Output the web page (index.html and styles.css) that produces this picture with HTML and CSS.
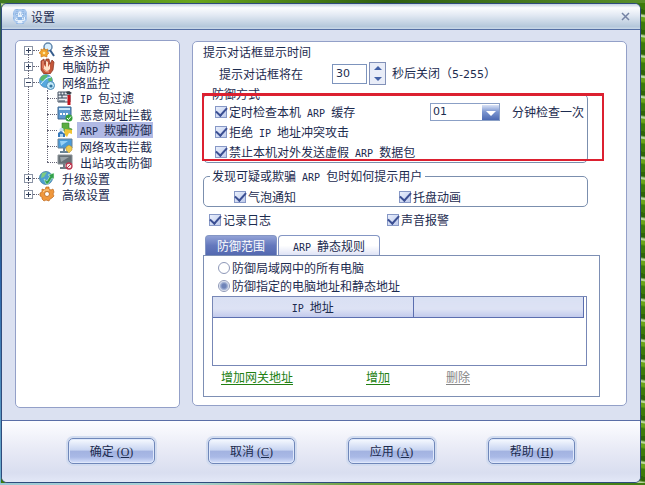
FILE: index.html
```
<!DOCTYPE html>
<html lang="zh-CN">
<head>
<meta charset="utf-8">
<title>设置</title>
<link rel="stylesheet" href="styles.css">
</head>
<body>
<main class="window">
  <header class="titlebar">
    <svg class="logo" width="16" height="18" viewBox="0 0 16 18"><path d="M3 1h10l2 3v8l-4 4H5l-4-4V4z" fill="#a9c8ee"/><path d="M8 3l4 4h-2v2h3v3l-3 3H6l-3-3V9h3V7H4z" fill="#e6f1fd"/><path d="M1 6h14M1 10h14M5 1v15M11 1v15" stroke="#7fa9dc" stroke-dasharray="1 1"/><path d="M6 9h4v3H6z" fill="#88b2e4"/></svg>
    <h1>设置</h1>
    <button class="close" aria-label="关闭"><svg width="9" height="9" viewBox="0 0 9 9"><path d="M1 1l7 7M8 1L1 8" stroke="#7482a4" stroke-width="1.5"/></svg></button>
  </header>

  <div class="content">
    <nav class="panel tree">
      <ul>
        <li class="root"><div class="row"><button class="toggle plus" aria-label="展开"></button><span class="stub"></span>
          <svg width="16" height="16" viewBox="0 0 16 16"><circle cx="9" cy="5" r="4" fill="#d8efff" stroke="#6388ad" stroke-width="1.5"/><path d="M11 8l4 6" stroke="#355c8c" stroke-width="2"/><path d="M5 6l1 2 3-1-1 3 2 1-2 2v2l-3-1-3 1v-3l-2-1 2-2V7l2 1z" fill="#f3a52d" stroke="#c87511" stroke-width=".6"/><circle cx="5" cy="11" r="1.3" fill="#ffe8a0"/></svg>
          <span class="name">查杀设置</span></div></li>
        <li class="root"><div class="row"><button class="toggle plus" aria-label="展开"></button><span class="stub"></span>
          <svg width="16" height="16" viewBox="0 0 16 16"><path d="M2 3l3-2 1 5 1-5h3l1 5 2-4 2 2-1 8-3 4H5l-3-4z" fill="#c4573a" stroke="#85301f" stroke-width=".7"/><path d="M5 7v4q3 4 6 0V6L9 9V4L7 3v6z" fill="#ffe3ca"/><path d="M4 3v7q2 5 6 4" fill="none" stroke="#f3a184"/></svg>
          <span class="name">电脑防护</span></div></li>
        <li class="root"><div class="row"><button class="toggle" aria-label="收起"></button><span class="stub"></span>
          <svg width="16" height="16" viewBox="0 0 16 16"><circle cx="7" cy="7" r="6.5" fill="#55a9df" stroke="#3577ab" stroke-width=".6"/><path d="M2 3q3-3 7-2L7 4 4 7 1 6zM9 5l4-2v4l-3 2z" fill="#5cb969"/><path d="M2 10q5-7 10-7" stroke="#e6f8ff" fill="none"/><circle cx="11.500" cy="11.500" r="4" fill="#c1e8f9" stroke="#4388b7"/><circle cx="12" cy="12" r="1.600" fill="#35759f"/></svg>
          <span class="name">网络监控</span></div>
          <ul class="children">
            <li class="row"><span class="stub"></span>
              <svg width="16" height="16" viewBox="0 0 16 16"><path d="M1 2h12v10H1z" fill="#e8edf2" stroke="#485565"/><path d="M1 5h12M1 8h9M4 2v3M7 2v3M5 5v3M2 11h6" stroke="#344354"/><path d="M9 2q3-2 6 1l-2 1h-3z" fill="#3b4148"/><path d="M10.500 5h3v10h-3z" fill="#c3141c"/></svg>
              <span class="name"><span class="latin">IP </span>包过滤</span></li>
            <li class="row"><span class="stub"></span>
              <svg width="16" height="16" viewBox="0 0 16 16"><path d="M1 1h13v12H1z" fill="#5c98cf" stroke="#3c6691"/><path d="M2 2h11v2H2z" fill="#c9e6fa"/><path d="M3 8h8" stroke="#fff" stroke-width="2" stroke-dasharray="2 1"/><circle cx="12" cy="12" r="3.500" fill="#35a03b"/><path d="M10 12l1.500 1.500L14 10.500" fill="none" stroke="#fff"/></svg>
              <span class="name">恶意网址拦截</span></li>
            <li class="row"><span class="stub"></span>
              <svg width="16" height="16" viewBox="0 0 16 16"><path d="M5 1h7v5l3 1-1 3-5 1-4-4z" fill="#5bad42" stroke="#358435" stroke-width=".6"/><path d="M8 7l7 1v4l-3-1-2 4-3-3z" fill="#f0c437"/><circle cx="4.500" cy="8" r="2.200" fill="#c9e1f2"/><path d="M1 15V11l3-2 4 3v3z" fill="#3679bb"/><path d="M3 12h3v3H3z" fill="#afd5ef"/></svg>
              <span class="name selected"><span class="latin">ARP </span>欺骗防御</span></li>
            <li class="row"><span class="stub"></span>
              <svg width="16" height="16" viewBox="0 0 16 16"><path d="M1 1h14v9H1z" fill="#4b9bd8" stroke="#6a8196"/><path d="M3 3h8L4 8z" fill="#97d1f6"/><path d="M7 10v3M3 14h8" stroke="#6b8496" stroke-width="2"/><path d="M9 9l3-2 3 2v3l-3 3-3-3z" fill="#efcb54" stroke="#a98624" stroke-width=".5"/></svg>
              <span class="name">网络攻击拦截</span></li>
            <li class="row"><span class="stub"></span>
              <svg width="16" height="16" viewBox="0 0 16 16"><path d="M1 1h14v9H1z" fill="#677076" stroke="#8a9196"/><path d="M3 3h9L4 8z" fill="#9aa3a7"/><path d="M7 10v3M3 14h7" stroke="#707a82" stroke-width="2"/><circle cx="12" cy="12" r="3" fill="#fbe9e9" stroke="#b93850" stroke-width="1.300"/><path d="M10 14l4-4" stroke="#b93850"/></svg>
              <span class="name">出站攻击防御</span></li>
          </ul></li>
        <li class="root"><div class="row"><button class="toggle plus" aria-label="展开"></button><span class="stub"></span>
          <svg width="16" height="16" viewBox="0 0 16 16"><circle cx="7" cy="8" r="6.500" fill="#4f9fd0" stroke="#2f7099" stroke-width=".7"/><path d="M3 3l5-1-3 5-3 1z" fill="#80cb82"/><path d="M5 9l3 2 3-5-2-1 6-2v6l-2-1-4 6H7z" fill="#32a04b" stroke="#e1ffe0" stroke-width=".5"/></svg>
          <span class="name">升级设置</span></div></li>
        <li class="root"><div class="row"><button class="toggle plus" aria-label="展开"></button><span class="stub"></span>
          <svg width="16" height="16" viewBox="0 0 16 16"><path d="M7 1h3v2l2 1 2-1 1 3-1 2 1 2-2 2-2 1-1 2-3-1-2 1-2-2V11L1 10V7l2-1V3l3 1z" fill="#f0983c" stroke="#bd691e" stroke-width=".7"/><circle cx="8" cy="8" r="2.500" fill="#fff" stroke="#c2762c"/><path d="M4 6q2-3 6-2" fill="none" stroke="#ffd896"/></svg>
          <span class="name">高级设置</span></div></li>
      </ul>
    </nav>

    <section class="panel settings">
      <h2>提示对话框显示时间</h2>
      <div class="timeout">
        <label for="sec">提示对话框将在</label>
        <input id="sec" class="seconds" type="text" value="30">
        <span class="spinner">
          <button aria-label="增加秒数"><svg width="8" height="4" viewBox="0 0 8 4"><path d="M4 0l4 4H0z" fill="#4361a6"/></svg></button>
          <button aria-label="减少秒数"><svg width="8" height="4" viewBox="0 0 8 4"><path d="M0 0h8L4 4z" fill="#4361a6"/></svg></button>
        </span>
        <span>秒后关闭（<span class="range">5-255</span>）</span>
      </div>

      <fieldset class="defence">
        <legend>防御方式</legend>
        <div class="option">
          <label class="check"><input type="checkbox" checked>定时检查本机<span class="latin"> ARP </span>缓存</label>
          <span class="interval">
            <span class="combo"><select id="every" aria-label="检查间隔"><option>01</option></select><svg width="17" height="15" viewBox="0 0 17 15"><defs><linearGradient id="drop" x2="0" y2="1"><stop offset="0" stop-color="#d9e2f6"/><stop offset=".45" stop-color="#7c96d0"/><stop offset="1" stop-color="#4c69b2"/></linearGradient></defs><path d="M0 0h17v15H0z" fill="url(#drop)"/><path d="M4 6h10l-5 5z" fill="#fff"/></svg></span>
            <label for="every">分钟检查一次</label>
          </span>
        </div>
        <div class="option"><label class="check"><input type="checkbox" checked>拒绝<span class="latin"> IP </span>地址冲突攻击</label></div>
        <div class="option"><label class="check"><input type="checkbox" checked>禁止本机对外发送虚假<span class="latin"> ARP </span>数据包</label></div>
        <div class="highlight"></div>
      </fieldset>

      <fieldset class="notify">
        <legend>发现可疑或欺骗<span class="latin"> ARP </span>包时如何提示用户</legend>
        <div class="pair near">
          <label class="check"><input type="checkbox" checked>气泡通知</label>
          <label class="check"><input type="checkbox" checked>托盘动画</label>
        </div>
      </fieldset>

      <div class="pair logs">
        <label class="check"><input type="checkbox" checked>记录日志</label>
        <label class="check"><input type="checkbox" checked>声音报警</label>
      </div>

      <div class="tabs" role="tablist">
        <button class="tab active" role="tab" aria-selected="true">防御范围</button>
        <button class="tab" role="tab" aria-selected="false"><span class="latin">ARP </span>静态规则</button>
      </div>
      <div class="scope" role="tabpanel">
        <label class="choice"><input type="radio" name="scope">防御局域网中的所有电脑</label>
        <label class="choice"><input type="radio" name="scope" checked>防御指定的电脑地址和静态地址</label>
        <div class="list">
          <table>
            <thead><tr><th class="address"><span class="latin">IP </span>地址</th><th></th></tr></thead>
          </table>
        </div>
        <div class="links">
          <a href="#">增加网关地址</a>
          <a href="#">增加</a>
          <a href="#" class="off">删除</a>
        </div>
      </div>
    </section>
  </div>

  <footer class="actions">
    <button>确定<span class="key">(<u>O</u>)</span></button>
    <button>取消<span class="key">(<u>C</u>)</span></button>
    <button>应用<span class="key">(<u>A</u>)</span></button>
    <button>帮助<span class="key">(<u>H</u>)</span></button>
  </footer>
</main>
</body>
</html>
```
FILE: styles.css
```
* { box-sizing: border-box; }

body {
  margin: 0;
  min-height: 100vh;
  display: flex;
  padding: 3px 4px 2px 1px;
  color: #1c2b4f;
  font: 12px/16px "Noto Sans CJK SC", sans-serif;
  background:
    linear-gradient(90deg, #3f7a22, #6aa61c 30%, #2f5f10 60%, #5a8f2a) top / 100% 3px no-repeat,
    linear-gradient(90deg, #9cc9d4, #a9d3d6 30%, #6f9f3c 55%, #3f7d12) bottom / 100% 2px no-repeat,
    linear-gradient(#31604f 45%, #2a62a8 55%, #6db0cf) left / 1px 100% no-repeat,
    repeating-linear-gradient(10deg, #3c7a0a 0 7px, #69a31a 9px 12px, #b9d69a 13px 14px, #2e6408 16px 20px);
}

h1, h2, ul { margin: 0; padding: 0; font-size: 12px; font-weight: 400; }
ul { list-style: none; }
button, input, select { font: inherit; color: inherit; margin: 0; padding: 0; border-radius: 0; }
svg { display: block; flex: none; }

.latin { font: 10px/12px "DejaVu Sans Mono", monospace; white-space: pre; }

.window {
  flex: 1;
  display: flex;
  flex-direction: column;
  border: 1px solid #2f4b7c;
  border-radius: 6px;
  overflow: hidden;
  background: #dbe1f1;
}

.titlebar {
  display: flex;
  align-items: center;
  height: 26px;
  padding: 0 10px;
  border-bottom: 1px solid #5570a5;
  background: linear-gradient(#c3d0e0, #fbfcfe 15%, #e2e9f3 45%, #b5c8db 90%, #c9d8e8);
}
.titlebar h1 { margin-left: 3px; flex: 1; }
.close { border: 0; background: none; }

.content {
  flex: 1;
  display: flex;
  align-items: flex-start;
  gap: 12px;
  padding: 10px 13px 12px;
}
.panel { background: #fff; border: 1px solid #93a0c8; border-radius: 5px; }

.tree { width: 165px; align-self: stretch; padding: 1px 8px; }
.row { display: flex; align-items: center; height: 16px; }
.root { position: relative; }
.root:not(:last-child)::before {
  content: "";
  position: absolute;
  left: 4px;
  top: 12px;
  bottom: -4px;
  border-left: 1px dotted #667;
}
.toggle {
  width: 9px;
  height: 9px;
  border: 1px solid #8b94a5;
  background: linear-gradient(#33405c, #33405c) center / 5px 1px no-repeat, #fff;
}
.toggle.plus {
  background: linear-gradient(#33405c, #33405c) center / 5px 1px no-repeat,
    linear-gradient(#33405c, #33405c) center / 1px 5px no-repeat, #fff;
}
.stub { width: 6px; border-top: 1px dotted #667; }
.name { margin-left: 4px; padding: 0 1px 0 3px; line-height: 15px; white-space: nowrap; }
.selected { background: #b0b9e4; }
.children { position: relative; padding-left: 23px; }
.children::before {
  content: "";
  position: absolute;
  left: 23px;
  top: 0;
  bottom: 8px;
  border-left: 1px dotted #667;
}
.children .stub { width: 10px; }

.settings { flex: 1; padding: 2px 26px 8px 10px; margin-top: 1px; }

.timeout { display: flex; align-items: center; height: 23px; margin: 2px 0; padding-left: 16px; }
.seconds { width: 35px; height: 20px; margin-left: 29px; padding-left: 3px; border: 1px solid #7d94bd; background: #fff; }
.seconds, .range, .combo select { font-family: "DejaVu Sans", sans-serif; font-size: 11px; }
.spinner { display: flex; flex-direction: column; width: 17px; height: 23px; margin: 0 6px 0 2px; border: 1px solid #8291b8; }
.spinner button { flex: 1; display: grid; place-items: center; border: 0; background: #e9edf8; }

fieldset { position: relative; min-width: 0; margin: 0 12px 0 0; border: 1px solid #7b8fae; border-radius: 5px; }
legend { height: 14px; line-height: 14px; margin-left: 6px; padding: 0 3px 0 2px; }

.defence { padding: 1px 0; }
.option { display: flex; align-items: center; height: 20px; padding-left: 11px; }
.option:nth-of-type(3) { height: 19px; }
.check { white-space: pre; }
.check input {
  appearance: none;
  width: 12px;
  height: 12px;
  margin: 2px 2px 0 0;
  border: 1px solid #8798c6;
  background: linear-gradient(135deg, #e9effc, #bfcbec);
  display: inline-grid;
  vertical-align: top;
  place-items: center;
}
.check input:checked::after {
  content: "";
  width: 9px;
  height: 5px;
  margin-bottom: 3px;
  border: solid #3b4f93;
  border-width: 0 0 2px 2px;
  transform: rotate(-48deg);
}

.interval { display: flex; align-items: center; margin: 0 3px 0 auto; }
.combo { display: flex; align-items: center; width: 70px; height: 18px; margin-right: 12px; border: 1px solid #8ba0c6; background: #fff; }
.combo select { appearance: none; flex: 1; min-width: 0; height: 16px; padding-left: 2px; border: 0; background: none; }

.highlight { position: absolute; inset: -8px -17px 1px -2px; border: 2px solid #dc2030; border-top-width: 3px; pointer-events: none; }

.notify { margin-top: 6px; padding: 6px 0 1px; }
.pair { display: grid; grid-template-columns: 178px 1fr; height: 16px; padding-left: 6px; }
.pair.near { grid-template-columns: 165px 1fr; padding-left: 30px; }
.logs { margin: 5px 0 7px; }

.tabs { display: flex; gap: 1px; height: 20px; padding-left: 2px; }
.tab {
  height: 20px;
  padding: 0 14px;
  border: 1px solid #8496c4;
  border-bottom: 0;
  border-radius: 4px 4px 0 0;
  background: linear-gradient(#fff 50%, #dfe3f5);
}
.tab.active { padding: 0 11px; color: #fff; background: linear-gradient(#92a2d6, #6478bd 50%, #5469b0); }

.scope { padding: 3px 12px 11px 8px; border: 1px solid #7d8fb4; }
.choice { display: flex; align-items: center; height: 18px; padding-left: 6px; }
.choice input { appearance: none; width: 12px; height: 12px; margin-right: 2px; border: 1px solid #8e98b8; border-radius: 50%; background: #fff; }
.choice input:checked { background: radial-gradient(circle, #6f84b8 0 2px, #b3c0dd 4px, #fff 5px); }

.list { height: 70px; margin: 1px 0 3px; padding-right: 2px; border: 1px solid #7787b6; }
.list table { width: 100%; border-collapse: collapse; table-layout: fixed; }
.list th {
  height: 20px;
  padding: 0;
  font-weight: 400;
  border-right: 1px solid #5b6eaf;
  border-bottom: 1px solid #5b6eaf;
  background: linear-gradient(#d9e0f3, #dde2f4 60%, #c2caec);
}
.address { width: 54%; }

.links { display: grid; grid-template-columns: 145px 80px 1fr; padding-left: 9px; }
.links a { justify-self: start; color: #228012; text-underline-offset: 2px; }
.links .off { color: #858585; }

.actions {
  display: flex;
  justify-content: center;
  gap: 53px;
  height: 62px;
  padding: 17px 0 0 1px;
  border-top: 1px solid #5a6ea6;
  background: linear-gradient(#fdfdff, #e9ebf6 45%, #d9def0 85%, #e3e8f7);
}
.actions button {
  width: 87px;
  height: 26px;
  border: 1px solid #6f87b9;
  border-radius: 5px;
  box-shadow: 0 0 0 2px #d2dcf0, inset 0 0 0 1px #dfe8fb;
  background: linear-gradient(#f7faff, #cad6f2 45%, #a3b3e1 52%, #a9b9e6 75%, #d6e1fb);
}
.key { margin-left: 3px; font: 12px/12px "Liberation Serif", serif; }
```
